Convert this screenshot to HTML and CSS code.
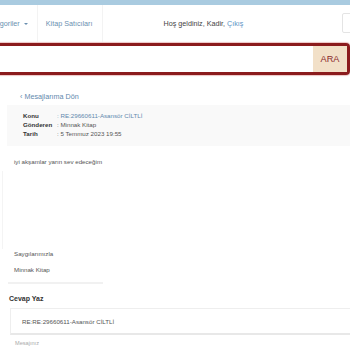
FILE: index.html
```html
<!DOCTYPE html>
<html lang="tr">
<head>
  <meta charset="UTF-8" />
  <meta name="viewport" content="width=device-width, initial-scale=1.0"/>
  <title>Mesaj Detayı</title>
  <link rel="stylesheet" href="styles.css">
</head>
<body>
  <div class="topbar"></div>

  <!-- Navigation -->
  <nav class="navbar">
    <ul class="nav">
      <li><a href="#">Kategoriler <span class="caret"></span></a></li>
      <li><a href="#">Kitap Satıcıları</a></li>
    </ul>
    <div class="welcome">Hoş geldiniz, Kadir, <a href="#">Çıkış</a></div>
    <div class="nav-box"></div>
  </nav>

  <!-- Search -->
  <form class="search">
    <input type="text" class="search-input">
    <button type="button" class="search-btn">ARA</button>
  </form>

  <!-- Message -->
  <div class="content">
    <a href="#" class="back">‹ Mesajlarıma Dön</a>

    <div class="msg-head">
      <div class="row"><span class="label">Konu</span><span class="value link">: RE:29660611-Asansör CİLTLİ</span></div>
      <div class="row"><span class="label">Gönderen</span><span class="value">: Minnak Kitap</span></div>
      <div class="row"><span class="label">Tarih</span><span class="value">: 5 Temmuz 2023 19:55</span></div>
    </div>

    <div class="msg-body">
      <p>iyi akşamlar yarın sev edeceğim</p>
      <div class="spacer"></div>
      <p>Saygılarımızla</p>
      <p class="sign">Minnak Kitap</p>
    </div>

    <hr class="divider">

    <h4 class="reply-title">Cevap Yaz</h4>
    <div class="reply">
      <div class="subject">RE:RE:29660611-Asansör CİLTLİ</div>
      <div class="placeholder">Mesajınız</div>
    </div>
  </div>
</body>
</html>
```

FILE: styles.css
```css
/* Base */
body {
  font-family: "Liberation Sans", Arial, sans-serif;
  margin: 0;
  color: #555;
  background: #fff;
  overflow: hidden;
  height: 350px;
}

a {
  text-decoration: none;
  color: #5f89ad;
}

.topbar {
  height: 5px;
  background-color: #a9cbe0;
}

/* Navbar */
.navbar {
  height: 37px;
  display: flex;
  align-items: center;
  font-size: 7.2px;
}

.nav {
  display: flex;
  list-style: none;
  margin: 0 0 0 -25px;
  padding: 0;
  height: 100%;
}

.nav li {
  display: flex;
  align-items: center;
  border-right: 1px solid #f3f3f3;
}

.nav a {
  padding: 0 9px 0 10px;
  color: #6a8fb0;
}

.nav li + li a {
  padding: 0 9px 0 8px;
}

.caret {
  display: inline-block;
  width: 0;
  height: 0;
  margin-left: 2px;
  vertical-align: middle;
  border-top: 2px solid #6a8fb0;
  border-left: 2px solid transparent;
  border-right: 2px solid transparent;
}

.welcome {
  margin-left: 61px;
  color: #444;
}

.welcome a {
  color: #5b93c4;
}

.nav-box {
  margin-left: auto;
  margin-right: -10px;
  width: 16px;
  height: 18px;
  border: 1px solid #e4e4e4;
  border-radius: 2px;
  align-self: flex-start;
  margin-top: 8px;
}

/* Search */
.search {
  display: flex;
  margin: 1px 0 0 -10px;
  height: 26px;
  border: 3px solid #8b1b1d;
  border-radius: 0 4px 4px 0;
  box-shadow: 0 0 1px 1px rgba(200, 90, 90, 0.35);
}

.search-input {
  flex: 1;
  border: none;
  outline: none;
  padding: 0;
}

.search-btn {
  width: 34px;
  border: none;
  padding: 0;
  background-color: #f2e0c8;
  color: #8b2c2c;
  font-family: inherit;
  font-size: 9.2px;
}

/* Content */
.content {
  padding: 17px 0 0 7px;
  font-size: 6.2px;
}

.back {
  display: block;
  margin-left: 13px;
  font-size: 7.2px;
  line-height: 9px;
}

.msg-head {
  margin-top: 4px;
  margin-right: -10px;
  padding: 6px 16px 8px;
  background-color: #f9f9f9;
}

.row {
  display: flex;
  line-height: 9px;
}

.label {
  width: 34px;
  font-weight: bold;
  color: #333;
}

.link {
  color: #5f89ad;
}

.msg-body {
  margin-left: -5px;
}

.msg-body p {
  margin: 0;
  padding-left: 12px;
  line-height: 9px;
}

.msg-body p:first-child {
  margin-top: 11px;
}

.spacer {
  height: 78px;
  margin-top: 5px;
  border-left: 1px solid #f4f4f4;
}

.msg-body .sign {
  margin-top: 7px;
}

.divider {
  width: 95px;
  margin: 8px 0 0 1px;
  border: none;
  border-top: 2px solid #f1f1f1;
}

.reply-title {
  margin: 10px 0 0 2px;
  font-size: 7px;
  color: #333;
  line-height: 9px;
}

.reply {
  margin-top: 5px;
  margin-left: 3px;
}

.subject {
  height: 24px;
  line-height: 26px;
  padding-left: 11px;
  border-top: 1px solid #eee;
  border-left: 1px solid #eee;
  border-bottom: 2px solid #e8e8e8;
  color: #555;
}

.placeholder {
  padding: 5px 0 0 5px;
  color: #aaa;
  font-size: 5.6px;
}
```
